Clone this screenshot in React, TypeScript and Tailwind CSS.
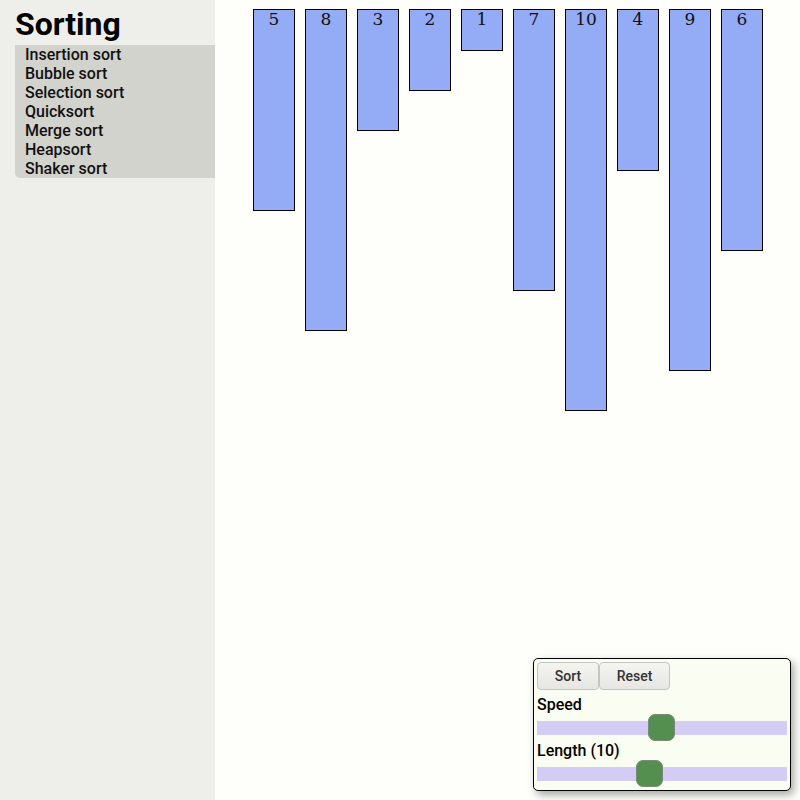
import React from "react";

const values = [5, 8, 3, 2, 1, 7, 10, 4, 9, 6];
const algos = [
  "Insertion sort",
  "Bubble sort",
  "Selection sort",
  "Quicksort",
  "Merge sort",
  "Heapsort",
  "Shaker sort",
];

function Slider({ pos }: { pos: number }) {
  return (
    <div className="relative h-[27px] flex items-center">
      <div className="h-[14px] w-[250px] bg-[#d3cdf5]" />
      <div
        className="absolute top-0 h-[27px] w-[27px] rounded-[7px] bg-[#548f50] border border-[#7a8a78]"
        style={{ left: pos }}
      />
    </div>
  );
}

export default function App() {
  return (
    <div
      className="flex w-[800px] h-[800px] overflow-hidden relative"
      style={{ fontFamily: "Roboto, 'Noto Sans', sans-serif" }}
    >
      <div className="w-[215px] shrink-0 h-full bg-[#eeeeea] pl-[15px]">
        <h1 className="text-[32px] font-bold leading-[37px] pt-[6px] pb-[2px] text-black">
          Sorting
        </h1>
        <ul className="bg-[#d3d3ce] rounded-bl-[5px] pl-[10px]">
          {algos.map((a) => (
            <li key={a} className="text-[16px] font-medium leading-[19px] text-[#111]">
              {a}
            </li>
          ))}
        </ul>
      </div>
      <div className="flex-1 h-full bg-[#fefefa] flex items-start gap-[10px] pl-[38px] pt-[9px]">
        {values.map((v) => (
          <div
            key={v}
            className="w-[42px] bg-[#94abf5] border border-black text-center text-[17px] leading-[18px] text-[#111]"
            style={{ height: v * 40 + 2, fontFamily: "'DejaVu Serif', serif" }}
          >
            {v}
          </div>
        ))}
      </div>
      <div className="absolute left-[533px] top-[658px] w-[258px] h-[133px] bg-[#fafdf2] border border-black rounded-[5px] shadow-[3px_4px_8px_rgba(0,0,0,0.35)] pl-[3px] pt-[3px]">
        <div className="flex">
          <button className="h-[28px] w-[62px] rounded-[4px] border border-[#c4c4c0] bg-gradient-to-b from-[#f4f4f1] to-[#e6e6e2] text-[14px] font-medium text-[#333]">
            Sort
          </button>
          <button className="h-[28px] w-[71px] rounded-[4px] border border-[#c4c4c0] bg-gradient-to-b from-[#f4f4f1] to-[#e6e6e2] text-[14px] font-medium text-[#333]">
            Reset
          </button>
        </div>
        <div className="text-[16px] font-medium leading-[19px] mt-[5px] text-black">Speed</div>
        <Slider pos={111} />
        <div className="text-[16px] font-medium leading-[19px] text-black">Length (10)</div>
        <Slider pos={99} />
      </div>
    </div>
  );
}
